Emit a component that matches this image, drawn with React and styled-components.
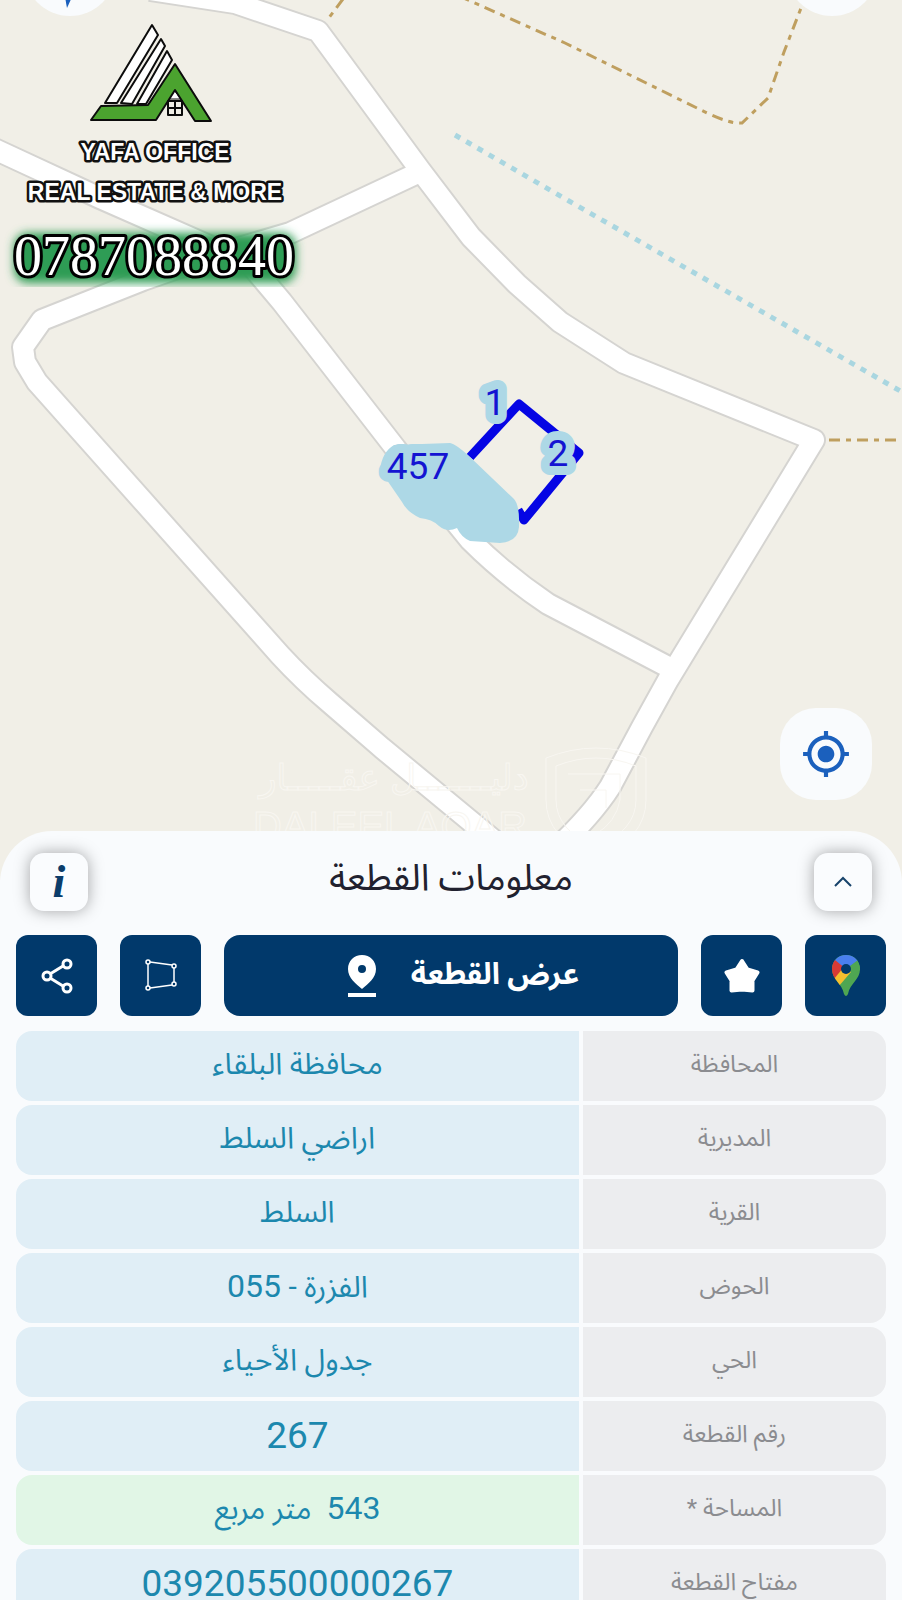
import React from "react";
import styled, { createGlobalStyle } from "styled-components";
import { MdMyLocation } from "react-icons/md";

const GlobalStyle = createGlobalStyle`
  * {
    box-sizing: border-box;
  }

  body {
    margin: 0;
    background: #f9fbfd;
    font-family: Roboto, "Noto Sans Arabic", "DejaVu Sans", sans-serif;
  }
`;

const Page = styled.main`
  display: flex;
  flex-direction: column;
  height: 100vh;
  overflow: hidden;
`;

const MapArea = styled.section`
  position: relative;
  flex: none;
  background: #f1efe7;
`;

const MapDrawing = styled.svg`
  display: block;
  width: 100%;
`;

const MapLabel = styled.text`
  font-family: Roboto, sans-serif;
  font-size: 37px;
  fill: #1414d2;
  stroke: #add8e6;
  stroke-width: 18px;
  stroke-linejoin: round;
  paint-order: stroke;
  text-anchor: middle;
`;

const BrandText = styled.text`
  font-family: "Liberation Sans Narrow", "Liberation Sans", sans-serif;
  font-size: 23px;
  font-weight: bold;
  fill: #fff;
  stroke: #111;
  stroke-width: 5px;
  stroke-linejoin: round;
  paint-order: stroke;
  text-anchor: middle;
`;

const PhoneText = styled(BrandText)`
  font-family: "Liberation Serif", serif;
  font-size: 56px;
  font-weight: 400;
  stroke: #000;
  stroke-width: 6px;
`;

const WatermarkText = styled.text`
  font-family: "Liberation Sans", "DejaVu Sans", sans-serif;
  font-size: 40px;
  fill: none;
  stroke: #f8f6f1;
  stroke-width: 1px;
  text-anchor: middle;
`;

const WatermarkArabic = styled(WatermarkText)`
  font-size: 36px;
`;

const MapButton = styled.button`
  position: absolute;
  display: flex;
  align-items: center;
  justify-content: center;
  width: 92px;
  height: 92px;
  padding: 0;
  border: 0;
  border-radius: 36px;
  background: #f9fbfd;
  color: #1b60bd;
`;

const CompassButton = styled(MapButton)`
  top: -76px;
  left: 24px;
  align-items: flex-end;
  padding-bottom: 8px;
  border-radius: 46px;
`;

const LayersButton = styled(MapButton)`
  top: -76px;
  right: 24px;
  border-radius: 46px;
`;

const LocateButton = styled(MapButton)`
  right: 30px;
  bottom: 80px;
`;

const Sheet = styled.section`
  position: relative;
  flex: none;
  margin-top: -49px;
  border-radius: 52px 52px 0 0;
  background: #f9fbfd;
`;

const SheetHeader = styled.header`
  display: flex;
  align-items: center;
  justify-content: space-between;
  padding: 22px 30px 24px;
`;

const Title = styled.h1`
  margin: 0;
  padding-bottom: 8px;
  color: #21212f;
  font-size: 37px;
  font-weight: 400;
  line-height: 40px;
`;

const SmallButton = styled.button`
  display: flex;
  align-items: center;
  justify-content: center;
  width: 58px;
  height: 58px;
  padding: 0;
  border: 0;
  border-radius: 14px;
  background: #fafcfe;
  box-shadow: 0 0 16px rgba(0, 0, 0, 0.35);
  color: #0b3d6b;
`;

const InfoMark = styled.span`
  font-family: "Liberation Serif", serif;
  font-size: 46px;
  font-style: italic;
  font-weight: bold;
  line-height: 46px;
`;

const Actions = styled.nav`
  display: flex;
  gap: 23px;
  padding: 0 16px;
`;

const ActionButton = styled.button`
  display: flex;
  align-items: center;
  justify-content: center;
  flex: none;
  width: 81px;
  height: 81px;
  padding: 0;
  border: 0;
  border-radius: 12px;
  background: #01396b;
  color: #fff;
`;

const ShowParcelButton = styled(ActionButton)`
  flex: 1;
  gap: 34px;
  padding-left: 24px;
  border-radius: 16px;
  font-family: inherit;
  font-size: 30px;
  font-weight: bold;
  line-height: 40px;
`;

const ButtonText = styled.span`
  padding-bottom: 4px;
`;

const InfoTable = styled.table`
  width: calc(100% - 24px);
  margin: 11px 12px 0;
  border-spacing: 4px;
  table-layout: fixed;
`;

const Label = styled.th`
  width: 35%;
  height: 70px;
  padding: 0 0 4px;
  border-radius: 0 16px 16px 0;
  background: #ecedef;
  color: #8b8c90;
  font-size: 24px;
  font-weight: 400;
  line-height: 40px;
`;

const Value = styled.td`
  height: 70px;
  padding: ${props => (props.$number ? "0" : "0 0 4px")};
  border-radius: 16px 0 0 16px;
  background: ${props => (props.$highlight ? "#e1f6e6" : "#e0eef6")};
  color: #1c88ae;
  font-size: ${props => (props.$number ? "37px" : "30px")};
  line-height: 40px;
  text-align: center;
`;

const Digits = styled.span`
  font-size: 32px;
`;

const roads = [
  "M150 -10 L235 3 L318 31 L332 50 L420 170 L471 237 L517 284 L560 322 L624 363 L814 440 L668 680 L642 727 L610 787 Q592 815 555 850",
  "M420 172 L290 233 L215 255 L143 280 L42 320 L23 347 L25 362 L37 382 L142 500 L280 655 Q303 680 330 703 L382 748 L520 862",
  "M-10 147 L100 198 L250 264 L282 302 L396 449 L470 540 Q505 575 548 604 L674 670",
];

const rows = [
  { label: "المحافظة", value: "محافظة البلقاء" },
  { label: "المديرية", value: "اراضي السلط" },
  { label: "القرية", value: "السلط" },
  { label: "الحوض", value: <>الفزرة - <Digits>055</Digits></> },
  { label: "الحي", value: "جدول الأحياء" },
  { label: "رقم القطعة", value: "267", number: true },
  { label: "المساحة *", value: <><Digits>543</Digits>&nbsp; متر مربع</>, highlight: true },
  { label: "مفتاح القطعة", value: "039205500000267", number: true },
];

const Logo = () => (
  <g stroke="#0c0c0c" strokeWidth="2" strokeLinejoin="round">
    <g fill="#fff">
      <path d="M152 25 L158 35 L117 103 L105 103 Z" />
      <path d="M161 39 L165 46 L132 104 L121 103 Z" />
      <path d="M167 51 L172 60 L146 104 L137 104 Z" />
      <path d="M174 90 L169 99 L181 99 Z" strokeWidth="1" />
    </g>
    <path
      d="M175 64 L211 121 L195 121 L175 90 L156 120 L91 120 L101 106 L148 105 Z"
      fill="#4ba32f"
    />
    <path d="M168 101 h14 v14 h-14 Z M175 101 v14 M168 108 h14" fill="none" />
  </g>
);

const MapView = () => (
  <MapDrawing viewBox="0 0 902 880" role="img" aria-label="خريطة القطعة">
    <defs>
      <filter id="glow" x="-10%" y="-40%" width="120%" height="180%">
        <feGaussianBlur stdDeviation="5" />
      </filter>
      <clipPath id="glowClip">
        <rect width="320" height="287" />
      </clipPath>
    </defs>

    <g fill="none" stroke="#d5d4d1" strokeWidth="24" strokeLinejoin="round">
      {roads.map(d => <path key={d} d={d} />)}
    </g>
    <g fill="none" stroke="#fff" strokeWidth="20" strokeLinejoin="round">
      {roads.map(d => <path key={d} d={d} />)}
    </g>

    <g fill="none" stroke="#bf9f5f" strokeWidth="3" strokeDasharray="11 6 5 6">
      <path d="M459 -4 L565 43 L707 113 Q730 124 742 123 L768 98 L784 52 L803 3" />
      <path d="M343 -1 L328 19" />
      <path d="M829 440 H902" />
    </g>
    <path d="M455 135 L569 201 L902 392" fill="none" stroke="#a9d6e0" strokeWidth="5" strokeDasharray="6 7" />

    <path
      d="M470 457 L519 404 L579 453 L524 520 L518 510"
      fill="none"
      stroke="#0505e4"
      strokeWidth="9"
      strokeLinejoin="round"
    />
    <path
      d="M380 470 Q382 452 394 445 L450 443 Q456 444 470 457 L513 498 Q520 504 519 527 Q518 542 500 543 L470 541 Q461 537 457 528 Q447 533 439 526 Q432 519 420 518 Q407 512 402 502 Z"
      fill="#add8e6"
    />
    <MapLabel x="495" y="415">1</MapLabel>
    <MapLabel x="558" y="466">2</MapLabel>
    <MapLabel x="418" y="479">457</MapLabel>

    <WatermarkArabic x="394" y="790">دليـــــــل عقـــــار</WatermarkArabic>
    <WatermarkText x="390" y="840">DALEEL AQAR</WatermarkText>
    <g fill="none" stroke="#f8f6f1" strokeWidth="1">
      <path d="M546 758 Q596 738 646 758 V800 Q646 838 596 860 Q546 838 546 800 Z" />
      <path d="M556 766 Q596 750 636 766 V800 Q636 830 596 848 Q556 830 556 800 Z" />
      <path d="M568 774 H620 V800 Q616 822 596 834 M580 790 H606 V808" />
    </g>

    <g clipPath="url(#glowClip)">
      <rect x="14" y="233" width="282" height="50" rx="14" fill="#2f9c55" filter="url(#glow)" />
    </g>
    <Logo />
    <BrandText x="155" y="160">YAFA OFFICE</BrandText>
    <BrandText x="155" y="200">REAL ESTATE &amp; MORE</BrandText>
    <PhoneText x="154" y="275">0787088840</PhoneText>
  </MapDrawing>
);

const ShareIcon = () => (
  <svg width="32" height="36" viewBox="0 0 32 36" fill="none" stroke="#fff" strokeWidth="3">
    <path d="M9 16 L22 8 M9 20 L22 28" />
    <circle cx="6" cy="18" r="4" />
    <circle cx="26" cy="6" r="4" />
    <circle cx="26" cy="30" r="4" />
  </svg>
);

const PolygonIcon = () => (
  <svg width="32" height="34" viewBox="0 0 32 34" fill="none" stroke="#fff" strokeWidth="1.5">
    <path d="M3 5 V27 M5 3 L27 6 M29 9 V23 M5 29 L27 26" />
    <circle cx="3" cy="3" r="2" />
    <circle cx="29" cy="7" r="2" />
    <circle cx="29" cy="25" r="2" />
    <circle cx="3" cy="29" r="2" />
  </svg>
);

const PinIcon = () => (
  <svg width="30" height="42" viewBox="0 0 30 42">
    <path
      d="M15 0 C7 0 1 6 1 14 C1 23 9 29 15 34 C21 29 29 23 29 14 C29 6 23 0 15 0 Z M15 10 A4 4 0 1 1 15 18 A4 4 0 1 1 15 10 Z"
      fill="#fff"
      fillRule="evenodd"
    />
    <path d="M1 38 H29 V42 H1 Z" fill="#fff" />
  </svg>
);

const StarIcon = () => (
  <svg width="36" height="36" viewBox="0 0 36 36">
    <path
      d="M18 3 L23.5 11.5 L33.5 14.5 L28.5 22.5 L28.5 32.5 L18 31.5 L7.5 32.5 L7.5 22.5 L2.5 14.5 L12.5 11.5 Z"
      fill="#fff"
      stroke="#fff"
      strokeWidth="4"
      strokeLinejoin="round"
    />
  </svg>
);

const GoogleMapsIcon = () => (
  <svg width="30" height="42" viewBox="0 0 30 42">
    <defs>
      <clipPath id="gpin">
        <path d="M15 0 C7 0 1 6 1 14 C1 25 11 28 13 39 Q15 43 17 39 C19 28 29 25 29 14 C29 6 23 0 15 0 Z" />
      </clipPath>
    </defs>
    <g clipPath="url(#gpin)">
      <path d="M0 0 H30 V42 H0 Z" fill="#4fa652" />
      <path d="M3 6 L10 -2 H22 L27 6 L15 14 Z" fill="#4a7fee" />
      <path d="M15 14 L27 5 L30 14 L22 21 Z" fill="#4fa652" />
      <path d="M0 8 L4 5 L15 14 L4 26 L0 20 Z" fill="#d93a35" />
      <path d="M3 24 L12 13 L20 17 L8 31 Z" fill="#f5bf2f" />
    </g>
    <circle cx="15" cy="14" r="5" fill="#01396b" />
  </svg>
);

const App = () => {
  return (
    <Page>
      <GlobalStyle />
      <MapArea>
        <MapView />
        <CompassButton aria-label="البوصلة">
          <svg width="14" height="40" viewBox="0 0 14 40">
            <path d="M7 0 L14 18 L4 40 L0 18 Z" fill="#1b60bd" />
          </svg>
        </CompassButton>
        <LayersButton aria-label="الطبقات" />
        <LocateButton aria-label="موقعي">
          <MdMyLocation size={50} />
        </LocateButton>
      </MapArea>
      <Sheet>
        <SheetHeader>
          <SmallButton aria-label="معلومات">
            <InfoMark>i</InfoMark>
          </SmallButton>
          <Title dir="rtl">معلومات القطعة</Title>
          <SmallButton aria-label="توسيع">
            <svg width="18" height="12" viewBox="0 0 18 12" fill="none" stroke="#17436b" strokeWidth="2">
              <path d="M1 10 L9 2 L17 10" />
            </svg>
          </SmallButton>
        </SheetHeader>
        <Actions>
          <ActionButton aria-label="مشاركة">
            <ShareIcon />
          </ActionButton>
          <ActionButton aria-label="حدود القطعة">
            <PolygonIcon />
          </ActionButton>
          <ShowParcelButton dir="rtl">
            <ButtonText>عرض القطعة</ButtonText>
            <PinIcon />
          </ShowParcelButton>
          <ActionButton aria-label="المفضلة">
            <StarIcon />
          </ActionButton>
          <ActionButton aria-label="خرائط جوجل">
            <GoogleMapsIcon />
          </ActionButton>
        </Actions>
        <InfoTable dir="rtl">
          <tbody>
            {rows.map(row => (
              <tr key={row.label}>
                <Label scope="row">{row.label}</Label>
                <Value $number={row.number} $highlight={row.highlight}>
                  {row.value}
                </Value>
              </tr>
            ))}
          </tbody>
        </InfoTable>
      </Sheet>
    </Page>
  );
};

export default App;
